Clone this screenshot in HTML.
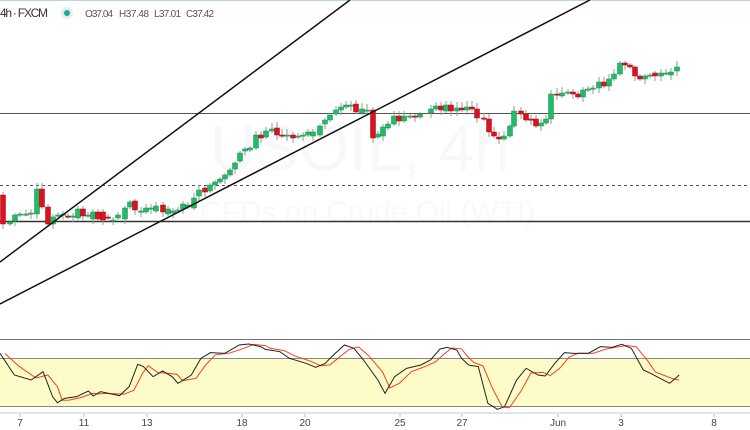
<!DOCTYPE html>
<html><head><meta charset="utf-8"><style>
html,body{margin:0;padding:0;background:#fff;width:750px;height:430px;overflow:hidden;font-family:"Liberation Sans",sans-serif}
</style></head><body>
<svg id="s" width="750" height="430" xmlns="http://www.w3.org/2000/svg" style="position:absolute;left:0;top:0">
<rect x="0" y="0" width="750" height="1" fill="#bcd3ee"/>
<text x="210" y="170" font-size="64" fill="#f8f8fa" font-family="Liberation Sans" textLength="300">USOIL, 4h</text>
<text x="200" y="222" font-size="30" fill="#f9f9fb" font-family="Liberation Sans" textLength="335">CFDs on Crude Oil (WTI)</text>
<line x1="0" y1="113.5" x2="750" y2="113.5" stroke="#555" stroke-width="1"/>
<line x1="0" y1="185.5" x2="750" y2="185.5" stroke="#555" stroke-width="1" stroke-dasharray="3,3"/>
<line x1="0" y1="221.5" x2="750" y2="221.5" stroke="#333" stroke-width="1.6"/>
<g id="c"></g>
<line x1="0" y1="262" x2="350" y2="0" stroke="#111" stroke-width="1.5"/>
<line x1="0" y1="304" x2="590" y2="0" stroke="#111" stroke-width="1.5"/>
<rect x="0" y="358" width="750" height="48" fill="#fdfcc8"/>
<line x1="0" y1="339.5" x2="750" y2="339.5" stroke="#777" stroke-width="1"/>
<line x1="0" y1="358.5" x2="750" y2="358.5" stroke="#888" stroke-width="1"/>
<line x1="0" y1="406.5" x2="750" y2="406.5" stroke="#888" stroke-width="1"/>
<rect x="0" y="412" width="750" height="2" fill="#e3e3e3"/>
<g id="st" transform="translate(0,330) scale(0.4783,0.33333)"></g>
<g font-size="10" fill="#444" text-anchor="middle">
<text x="20" y="426">7</text><text x="84" y="426">11</text><text x="147" y="426">13</text>
<text x="242" y="426">18</text><text x="305" y="426">20</text><text x="400" y="426">25</text>
<text x="462" y="426">27</text><text x="558" y="426">Jun</text><text x="621" y="426">3</text><text x="714" y="426">8</text>
</g>
<g stroke="#bbb" stroke-width="1">
<line x1="20" y1="414" x2="20" y2="417"/><line x1="84" y1="414" x2="84" y2="417"/><line x1="147" y1="414" x2="147" y2="417"/><line x1="242" y1="414" x2="242" y2="417"/><line x1="305" y1="414" x2="305" y2="417"/><line x1="400" y1="414" x2="400" y2="417"/><line x1="462" y1="414" x2="462" y2="417"/><line x1="558" y1="414" x2="558" y2="417"/><line x1="621" y1="414" x2="621" y2="417"/><line x1="714" y1="414" x2="714" y2="417"/>
</g>
<text x="0" y="17" font-size="12" fill="#333" textLength="48">4h · FXCM</text>
<circle cx="67" cy="13" r="6" fill="#e0f2ee"/><circle cx="67" cy="13" r="3" fill="#26a69a"/>
<g font-size="10" fill="#555">
<text x="85" y="17" textLength="28">O37.04</text><text x="119" y="17" textLength="30">H37.48</text><text x="154" y="17" textLength="27">L37.01</text><text x="186" y="17" textLength="28">C37.42</text>
</g>
</svg>
<script>
var A=[[3,105,134],[10,134,132],[15,131,125],[20,125,124],[26,124,124],[31,124,123],[37,124,99],[42,99,117],[48,117,134],[53,134,127],[58,126,125],[63,125,124],[68,126,127],[73,127,126],[78,128,119],[83,119,126],[88,126,125],[93,129,122],[98,122,129],[103,122,130],[108,127,128],[113,130,130],[118,128,125],[125,129,118],[130,117,112],[135,111,120],[141,122,121],[146,122,118],[151,119,118],[156,121,116],[163,115,122],[168,124,119],[173,123,121],[178,121,120],[183,119,114],[188,117,115],[194,118,108],[199,106,100],[205,98,102],[210,101,95],[215,95,92],[220,92,89],[225,89,85],[230,85,80],[235,79,73],[240,71,63],[245,61,59],[250,60,58],[256,58,45],[261,45,48],[266,47,41],[272,41,39],[277,38,45],[282,45,46],[287,46,45],[293,45,48],[298,47,46],[303,46,45],[308,45,42],[313,46,42],[320,45,36],[325,34,30],[330,30,25],[336,24,20],[341,20,17],[346,17,15],[351,16,15],[356,14,22],[362,23,19],[367,20,20]];
var B=[[373,110,138],[378,137,134],[383,136,127],[388,128,124],[394,124,116],[399,116,121],[404,121,116],[410,117,116],[415,116,117],[420,117,114],[431,113,109],[436,109,106],[441,106,110],[446,111,105],[451,105,111],[457,111,108],[462,108,110],[467,110,107],[472,107,109],[477,109,118],[484,118,119],[489,119,132],[494,132,136],[499,137,139],[504,139,136],[510,136,126],[514,126,111],[521,111,114],[526,114,120],[531,119,120],[536,119,126],[541,126,123],[546,123,119],[551,119,94],[557,94,95],[562,96,93],[568,93,92],[573,92,94],[578,94,97],[583,97,90],[588,90,89],[593,89,88],[599,88,82],[604,82,86],[609,86,79],[614,79,74],[620,74,63],[625,63,65],[630,65,67],[635,67,76],[640,76,79],[645,79,76],[650,76,75],[655,73,76],[661,76,73],[666,73,73],[671,75,72],[677,71,67]];
A.forEach(function(a){a[1]+=90;a[2]+=90;});
var D=A.concat(B),h='';
D.forEach(function(a){var x=a[0],o=a[1],c=a[2],up=c<=o,col=up?'#22bb66':'#dd1122';var t=Math.min(o,c),b=Math.max(o,c);var hh=Math.max(b-t,1.2);
var wt=t-2-(x*7%5),wb=b+2+(x*3%6);
h+='<line x1="'+x+'" y1="'+wt+'" x2="'+x+'" y2="'+wb+'" stroke="#999" stroke-width="1"/>';
h+='<rect x="'+(x-2.5)+'" y="'+t+'" width="5" height="'+hh+'" fill="'+col+'" stroke="'+(up?'#1a8f50':'#a01010')+'" stroke-width="0.5"/>';});
document.getElementById('c').innerHTML=h;
var K=[[0,70],[30,135],[65,150],[90,125],[110,200],[120,218],[135,205],[160,200],[185,183],[195,198],[210,185],[250,197],[270,170],[288,103],[300,110],[320,140],[340,123],[360,140],[372,160],[400,135],[420,85],[440,68],[470,70],[500,45],[520,42],[545,50],[555,58],[585,65],[605,85],[640,100],[660,112],[680,100],[695,78],[720,45],[740,55],[760,90],[790,150],[805,190],[825,140],[850,115],[880,105],[900,90],[920,57],[935,52],[955,60],[965,85],[980,105],[1000,110],[1020,220],[1040,238],[1055,230],[1080,150],[1100,115],[1125,135],[1140,138],[1160,100],[1180,68],[1200,70],[1230,70],[1255,50],[1280,52],[1300,43],[1320,55],[1345,120],[1360,130],[1400,160],[1420,135]];
var R=[];for(var i=0;i<K.length;i++){var p=K[i],q=K[Math.max(0,i-1)];R.push([p[0]+10,(p[1]*0.6+q[1]*0.4)]);}
R[R.length-1]=[1420,150];
function pl(P){return P.map(function(p){return p[0]+','+p[1]}).join(' ');}
document.getElementById('st').innerHTML='<polyline points="'+pl(R)+'" fill="none" stroke="#f04020" vector-effect="non-scaling-stroke" style="stroke-width:1"/><polyline points="'+pl(K)+'" fill="none" stroke="#222" vector-effect="non-scaling-stroke" style="stroke-width:1"/>';
</script>
</body></html>
